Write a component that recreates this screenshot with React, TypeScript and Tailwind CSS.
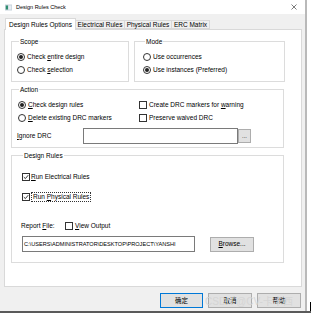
import React from 'react';

const font = { fontFamily: '"Liberation Sans", "Noto Sans CJK SC", sans-serif' };

const Radio: React.FC<{ checked?: boolean }> = ({ checked }) => (
  <span className="w-[8px] h-[8px] rounded-full border border-[#333] bg-white flex items-center justify-center shrink-0">
    {checked && <span className="w-[4px] h-[4px] rounded-full bg-[#222]" />}
  </span>
);

const Check: React.FC<{ checked?: boolean }> = ({ checked }) => (
  <span className="w-[8px] h-[8px] border border-[#333] bg-white flex items-center justify-center shrink-0">
    {checked && (
      <svg width="6" height="6" viewBox="0 0 6 6">
        <path d="M0.8 3.1 L2.4 4.6 L5.2 1.2" fill="none" stroke="#222" strokeWidth="0.9" />
      </svg>
    )}
  </span>
);

// text with one underlined access key
const Key: React.FC<{ pre?: string; k: string; post?: string }> = ({ pre, k, post }) => (
  <span className="whitespace-nowrap">
    {pre}
    <span className="underline underline-offset-[1px]">{k}</span>
    {post}
  </span>
);

const Group: React.FC<{ title: string; className?: string; children: React.ReactNode }> = ({ title, className, children }) => (
  <fieldset className={`border border-[#dcdcdc] ${className ?? ''}`}>
    <legend className="ml-[2px] px-[1px] leading-[9px] text-[6.5px]">{title}</legend>
    {children}
  </fieldset>
);

const Btn: React.FC<{ children: React.ReactNode; def?: boolean; className?: string }> = ({ children, def, className }) => (
  <div
    className={`h-[15px] flex items-center justify-center bg-[#e1e1e1] border ${def ? 'border-[#0078d7]' : 'border-[#adadad]'} ${className ?? ''}`}
  >
    {children}
  </div>
);

export default function App() {
  return (
    <div className="w-[311px] h-[315px] bg-white flex flex-col overflow-hidden text-black text-[6.5px] relative" style={font}>
      <div className="flex h-[311px]">
        <div className="w-[305px] flex flex-col">
          {/* title bar */}
          <div className="h-[14px] bg-white flex items-center pl-[5px] pr-[4px]">
            <svg width="7" height="7" viewBox="0 0 7 7" className="shrink-0">
              <rect x="0" y="0.5" width="7" height="6" fill="#c8d3dc" />
              <rect x="0.8" y="1.5" width="2.2" height="4" fill="#2f8f6f" />
              <rect x="3.5" y="1.5" width="2.8" height="4" fill="#e8eef3" />
            </svg>
            <span className="ml-[4px] text-[5.5px]">Design Rules Check</span>
            <svg width="6" height="6" viewBox="0 0 6 6" className="ml-auto mr-[4px]">
              <path d="M0.5 0.5 L5.5 5.5 M5.5 0.5 L0.5 5.5" stroke="#444" strokeWidth="0.7" />
            </svg>
          </div>

          {/* window body */}
          <div className="flex-1 bg-[#f0f0f0] pt-[4px] px-[4px] flex flex-col">
            {/* tabs */}
            <div className="flex items-end h-[11px] pl-[1px]">
              <div className="w-[71px] h-[12px] bg-white border border-[#d9d9d9] border-b-0 flex items-center justify-center relative z-10 -mb-px">
                Design Rules Options
              </div>
              <div className="w-[49px] h-[9px] bg-[#f0f0f0] border border-[#d9d9d9] border-l-0 flex items-center justify-center">
                Electrical Rules
              </div>
              <div className="w-[47px] h-[9px] bg-[#f0f0f0] border border-[#d9d9d9] border-l-0 flex items-center justify-center">
                Physical Rules
              </div>
              <div className="w-[38px] h-[9px] bg-[#f0f0f0] border border-[#d9d9d9] border-l-0 flex items-center justify-center">
                ERC Matrix
              </div>
            </div>

            {/* tab panel */}
            <div className="w-[298px] h-[258px] bg-white border border-[#d9d9d9] pl-[6px] pt-[7px]">
              {/* scope / mode */}
              <div className="flex gap-[5px]">
                <Group title="Scope" className="w-[118px] pl-[5px] pt-[4px] pb-[5px]">
                  <div className="h-[13px] flex items-center gap-[2px]">
                    <Radio checked />
                    <Key pre="Check " k="e" post="ntire design" />
                  </div>
                  <div className="h-[13px] flex items-center gap-[2px]">
                    <Radio />
                    <Key pre="Check " k="s" post="election" />
                  </div>
                </Group>
                <Group title="Mode" className="w-[151px] pl-[8px] pt-[4px] pb-[5px]">
                  <div className="h-[13px] flex items-center gap-[2px]">
                    <Radio />
                    <span>Use occurrences</span>
                  </div>
                  <div className="h-[13px] flex items-center gap-[2px]">
                    <Radio checked />
                    <span>Use instances (Preferred)</span>
                  </div>
                </Group>
              </div>

              {/* action */}
              <Group title="Action" className="w-[273px] mt-[3px] pl-[5px] pt-[4px] pb-[3px]">
                <div className="grid grid-cols-[122px_1fr]">
                  <div className="h-[13px] flex items-center gap-[2px] pl-[1px]">
                    <Radio checked />
                    <Key k="C" post="heck design rules" />
                  </div>
                  <div className="h-[13px] flex items-center gap-[2px]">
                    <Check />
                    <Key pre="Create DRC markers for " k="w" post="arning" />
                  </div>
                  <div className="h-[13px] flex items-center gap-[2px] pl-[1px]">
                    <Radio />
                    <Key k="D" post="elete existing DRC markers" />
                  </div>
                  <div className="h-[13px] flex items-center gap-[2px]">
                    <Check />
                    <span>Preserve waived DRC</span>
                  </div>
                </div>
                <div className="flex items-center mt-[4px] h-[16px]">
                  <span className="w-[66px]">
                    <Key k="I" post="gnore DRC" />
                  </span>
                  <div className="w-[155px] h-[16px] border border-[#7a7a7a] bg-white" />
                  <div className="w-[13px] h-[14px] bg-[#e1e1e1] border border-[#adadad] flex items-center justify-center text-[6px] leading-none">
                    ...
                  </div>
                </div>
              </Group>

              {/* design rules */}
              <Group title="Design Rules" className="w-[273px] mt-[3px] pl-[9px] pt-[10px] pb-[10px]">
                <div className="h-[13px] flex items-center gap-[1px] pl-[1px]">
                  <Check checked />
                  <Key k="R" post="un Electrical Rules" />
                </div>
                <div className="h-[13px] flex items-center gap-[1px] pl-[1px] mt-[7px]">
                  <Check checked />
                  <span className="border border-dotted border-[#333] px-[1px] leading-[8px]">
                    Run <Key k="P" post="hysical Rules" />
                  </span>
                </div>
                <div className="h-[13px] flex items-center mt-[16px]">
                  <span className="w-[44px]">
                    <Key pre="Report " k="F" post="ile:" />
                  </span>
                  <Check />
                  <span className="ml-[2px]">
                    <Key k="V" post="iew Output" />
                  </span>
                </div>
                <div className="flex items-center mt-[4px] pl-[1px]">
                  <div className="w-[173px] h-[16px] border border-[#7a7a7a] bg-white flex items-center pl-[1px] overflow-hidden whitespace-nowrap text-[5.6px]">
                    C:\USERS\ADMINISTRATOR\DESKTOP\PROJECT\YANSHI
                  </div>
                  <Btn className="w-[44px] ml-[15px] h-[14px]">
                    <Key k="B" post="rowse..." />
                  </Btn>
                </div>
              </Group>
            </div>

            {/* dialog buttons */}
            <div className="flex justify-end gap-[5px] mt-[6px] pr-[0px]">
              <Btn def className="w-[43px]">确定</Btn>
              <Btn className="w-[44px]">取消</Btn>
              <Btn className="w-[44px]">帮助</Btn>
            </div>
          </div>
        </div>
        <div className="w-[2px] bg-[#b9b9b9]" />
        <div className="w-[4px] bg-white flex flex-col justify-end items-end">
          <div className="w-[1px] h-[9px] bg-black" />
        </div>
      </div>
      <div className="h-[2px] bg-[#5a5a5a]" />

      {/* watermark */}
      <div className="absolute left-[205px] top-[294px] text-[10px] text-[#d4d4d4] opacity-90 pointer-events-none whitespace-nowrap">
        CSDN @CV-卡卡西
      </div>
    </div>
  );
}
